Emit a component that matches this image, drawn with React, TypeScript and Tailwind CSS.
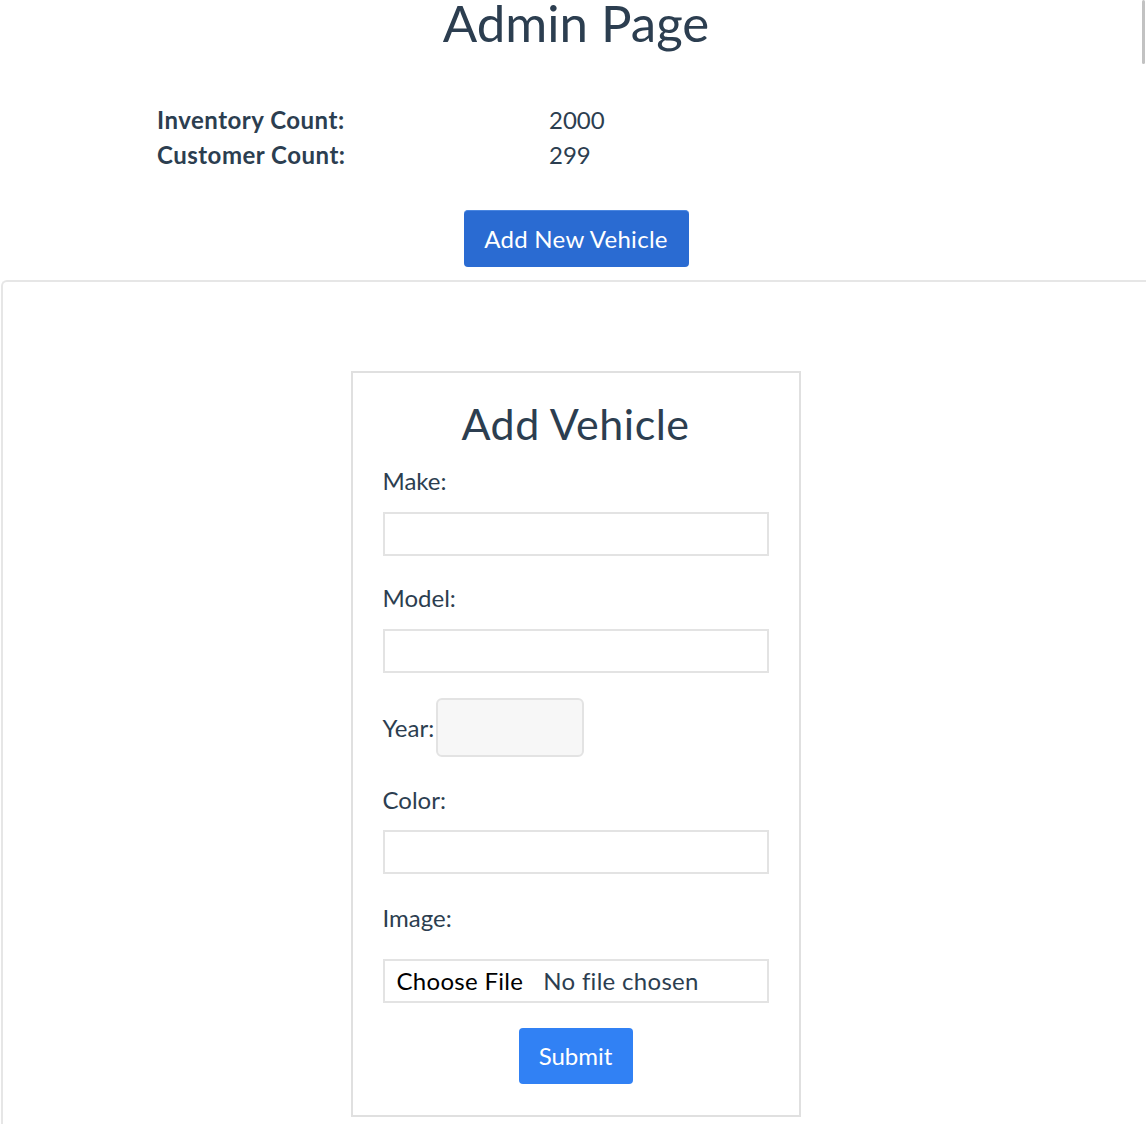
import React from 'react';

const font = {fontFamily: 'Lato, "Noto Sans", sans-serif'};

const Label = ({text, className = ''}: {text: string; className?: string}) => (
  <label className={`block text-[24px] leading-[28px] ${className}`}>{text}</label>
);

const TextInput = ({className = ''}: {className?: string}) => (
  <input
    type="text"
    className={`block w-full h-[44px] border-2 border-[#e3e3e3] bg-white outline-none ${className}`}
  />
);

const App = () => {
  const stats = [
    {label: 'Inventory Count:', value: '2000'},
    {label: 'Customer Count:', value: '299'},
  ];

  return (
    <div className="relative w-full min-h-[1124px] overflow-hidden bg-white text-[#2c3e50]" style={font}>
      <div className="absolute right-[1px] top-0 w-[3px] h-[64px] rounded-full bg-[#c2c2c2]" />
      <div className="w-[1152px]">
        <h1 className="text-center text-[51px] leading-[46px] font-normal">Admin Page</h1>

        <div className="mt-[56px] pl-[157px] grid grid-cols-[392px_auto] text-[24px] leading-[35px]">
          {stats.map((s) => (
            <React.Fragment key={s.label}>
              <span className="font-bold tracking-[0.5px]">{s.label}</span>
              <span>{s.value}</span>
            </React.Fragment>
          ))}
        </div>

        <div className="mt-[38px] flex justify-center">
          <button className="w-[225px] h-[57px] rounded-[4px] bg-[#2a6bd2] border-t border-[#4a86e0] text-white text-[24px] leading-none tracking-[0.3px]">
            Add New Vehicle
          </button>
        </div>

        <section className="mt-[13px] ml-px mr-[4px] border-t-2 border-l-2 border-[#e6e6e6] rounded-tl-md pt-[89px] pb-[40px]">
          <form className="mx-auto w-[450px] border-2 border-[#e0e0e0] px-[30px] pt-[27px] pb-[31px]">
            <h2 className="text-center text-[43px] leading-[48px] font-normal tracking-[0.5px]">Add Vehicle</h2>

            <Label text="Make:" className="mt-[19px]" />
            <TextInput className="mt-[17px]" />

            <Label text="Model:" className="mt-[28px]" />
            <TextInput className="mt-[17px]" />

            <div className="mt-[25px] flex items-center">
              <Label text="Year:" />
              <input
                type="text"
                className="ml-[2px] w-[148px] h-[59px] rounded-md border-2 border-[#e3e3e3] bg-[#f7f7f7] outline-none"
              />
            </div>

            <Label text="Color:" className="mt-[29px]" />
            <TextInput className="mt-[16px]" />

            <Label text="Image:" className="mt-[30px]" />
            <div className="mt-[27px] h-[44px] border-2 border-[#e3e3e3] flex items-center pl-[12px] text-[24px] tracking-[0.3px]">
              <span className="text-black">Choose File</span>
              <span className="ml-[20px]">No file chosen</span>
            </div>

            <div className="mt-[25px] flex justify-center">
              <button
                type="button"
                className="w-[114px] h-[56px] rounded-[4px] bg-[#3181f4] text-white text-[24px] leading-none"
              >
                Submit
              </button>
            </div>
          </form>
        </section>
      </div>
    </div>
  );
};

export default App;
